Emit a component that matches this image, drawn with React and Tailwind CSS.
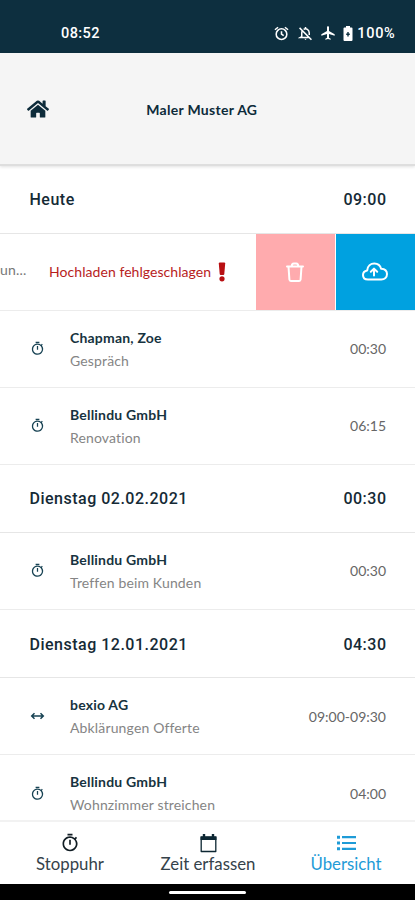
import React from 'react';
import { FaHome } from 'react-icons/fa';
import { MdAirplanemodeActive, MdOutlineTimer } from 'react-icons/md';

const days = [
    {
        title: 'Heute',
        total: '09:00',
        failed: true,
        entries: [
            { name: 'Chapman, Zoe', task: 'Gespräch', time: '00:30' },
            { name: 'Bellindu GmbH', task: 'Renovation', time: '06:15' },
        ],
    },
    {
        title: 'Dienstag 02.02.2021',
        total: '00:30',
        entries: [{ name: 'Bellindu GmbH', task: 'Treffen beim Kunden', time: '00:30' }],
    },
    {
        title: 'Dienstag 12.01.2021',
        total: '04:30',
        entries: [
            { name: 'bexio AG', task: 'Abklärungen Offerte', time: '09:00-09:30', range: true },
            { name: 'Bellindu GmbH', task: 'Wohnzimmer streichen', time: '04:00' },
        ],
    },
];

function AlarmIcon() {
    return (
        <svg width="15" height="15" viewBox="0 0 24 24" fill="none" stroke="currentColor" strokeWidth="2.5">
            <circle cx="12" cy="13" r="8.5" />
            <path d="M12 8.5V13l3.500 2.500M1.500 6l5-4M22.500 6l-5-4" />
        </svg>
    );
}

function BellOffIcon() {
    return (
        <svg width="15" height="15" viewBox="0 0 24 24" fill="none" stroke="currentColor" strokeWidth="2.400">
            <path d="M2.500 3l19 19M6.500 8.500C6 9.500 6 10.500 6 11.500V17l-2 1.200h14M9 5.500C13 3 18 6 18 11v3.500M12 1.500v3" />
            <path d="M10 20.500h4l-2 2z" fill="currentColor" stroke="none" />
        </svg>
    );
}

function BatteryIcon() {
    return (
        <svg width="10" height="15" viewBox="0 0 10 15">
            <path d="M3 0h4v1.500h1.500q1 0 1 1V14q0 1-1 1h-7q-1 0-1-1V2.500q0-1 1-1H3z" fill="currentColor" />
            <path d="M5 6v4.400M3.200 8.200h3.600" stroke="#0d2f3f" strokeWidth="1.400" />
        </svg>
    );
}

function TrashIcon() {
    return (
        <svg width="20" height="22" viewBox="0 0 20 22" fill="none" stroke="currentColor" strokeWidth="2" strokeLinejoin="round" strokeLinecap="round">
            <path d="M2 5.500h16M3.500 5.500l.9 13q.1 1.500 1.500 1.500h8.200q1.400 0 1.500-1.500l.9-13M6.800 5q0-2.600 1.900-2.600h2.600q1.900 0 1.900 2.600" />
        </svg>
    );
}

function CloudUploadIcon() {
    return (
        <svg width="26" height="19" viewBox="0 0 26 19" fill="none" stroke="currentColor" strokeWidth="2" strokeLinejoin="round" strokeLinecap="round">
            <path d="M6 17.500C2.800 17.500 1 15.500 1 13c0-2.500 1.700-4.200 4.200-4.600C5.600 4 8.800 1.500 12.300 1.500c3.400 0 6 2 6.800 5.300 3.600.2 5.900 2.300 5.900 5.300 0 3.200-2.400 5.400-5.700 5.400z" />
            <path d="M12 13.500V7M8.800 9.800L12 6.600l3.200 3.200" />
        </svg>
    );
}

function RangeIcon() {
    return (
        <svg width="15" height="10" viewBox="0 0 15 10" fill="none" stroke="currentColor" strokeWidth="1.500">
            <path d="M2 5h11M4.500 2.200L1.700 5l2.800 2.800M10.500 2.200L13.300 5l-2.800 2.800" />
        </svg>
    );
}

function CalendarIcon() {
    return (
        <svg width="17" height="19" viewBox="0 0 17 19">
            <path d="M1.200 3.500h14.600v14H1.200z" fill="none" stroke="currentColor" strokeWidth="1.300" strokeLinejoin="round" />
            <path d="M.5 2.300h16v3.700H.5zM2.800 0h2.400V4H2.800zM11.800 0h2.400V4h-2.400z" fill="currentColor" />
        </svg>
    );
}

function ListIcon() {
    return (
        <svg width="19" height="16" viewBox="0 0 19 16" fill="currentColor">
            <path d="M0 .7h3v3H0zM0 6.500h3v3H0zM0 12.300h3v3H0zM5 1.100h14v2.200H5zM5 6.900h14v2.200H5zM5 12.700h14v2.200H5z" />
        </svg>
    );
}

function StatusBar() {
    return (
        <div className="flex h-[52.500px] shrink-0 items-end justify-between bg-[#0d2f3f] pr-[19.500px] pb-[11px] pl-[61px] font-['Roboto',sans-serif] text-[14.500px] leading-[17px] font-medium text-white">
            <span className="tracking-[0.4px]">08:52</span>
            <div className="flex items-center">
                <AlarmIcon />
                <span className="ml-[9px]"><BellOffIcon /></span>
                <MdAirplanemodeActive className="ml-[7px] size-[16px]" />
                <span className="ml-[7px]"><BatteryIcon /></span>
                <span className="ml-[4px] tracking-[0.7px]">100%</span>
            </div>
        </div>
    );
}

function FailedEntry() {
    return (
        <div className="flex h-[77px] shrink-0 border-b border-[#ececec]">
            <div className="flex flex-1 items-center">
                <span className="mb-[4px] w-[49px] text-[14px] tracking-[0.2px] text-[#777]">un...</span>
                <span className="mb-px text-[14px] tracking-[0.060px] whitespace-nowrap text-[#b71c1c]">Hochladen fehlgeschlagen</span>
                <svg className="ml-[7px]" width="8" height="20" viewBox="0 0 8 20" fill="#b80f12">
                    <path d="M.8 1.500q0-1 1-1h4.400q1 0 1 1L6.300 12q-.1 1-1 1H2.700q-.9 0-1-1z" />
                    <circle cx="4" cy="16.800" r="2.600" />
                </svg>
            </div>
            <button className="flex w-[79px] items-center justify-center bg-[#ffabae] pr-px text-white"><TrashIcon /></button>
            <button className="ml-[1px] flex w-[79px] items-center justify-center bg-[#00a1e0] pr-px text-white"><CloudUploadIcon /></button>
        </div>
    );
}

function Entry({ entry }) {
    return (
        <div className="flex h-[77.200px] shrink-0 items-center border-b border-[#ececec] pr-[29px] pl-[30px]">
            <span className="flex w-[40px] items-center text-[#174253]">
                {entry.range ? <RangeIcon /> : <MdOutlineTimer className="size-[15px]" />}
            </span>
            <div className="flex-1 text-[14px] leading-[23px]">
                <div className="font-bold tracking-[0.2px] text-[#173340]">{entry.name}</div>
                <div className="tracking-[0.150px] text-[#858585]">{entry.task}</div>
            </div>
            <span className="text-[14px] text-[#666]">{entry.time}</span>
        </div>
    );
}

function Day({ day }) {
    return (
        <>
            <div className="flex h-[68px] shrink-0 items-center justify-between border-b border-[#e6e6e6] pt-[2px] pr-[28.500px] pl-[29.500px] font-['Roboto',sans-serif] text-[16px] font-medium tracking-[0.500px] text-[#152a36]">
                <span>{day.title}</span>
                <span>{day.total}</span>
            </div>
            {day.failed && <FailedEntry />}
            {day.entries.map((entry, i) => <Entry key={i} entry={entry} />)}
        </>
    );
}

function TabBar() {
    return (
        <div className="grid h-[64px] shrink-0 grid-cols-3 border-t-2 border-[#f2f2f2] bg-white pl-px text-[16.800px] leading-[20px] text-[#35424a]">
            <div className="flex flex-col items-center pt-[11px]">
                <MdOutlineTimer className="size-[20px] text-[#111d24]" />
                <span className="mt-px">Stoppuhr</span>
            </div>
            <div className="flex flex-col items-center pt-[11px]">
                <span className="flex h-[20px] items-center text-[#0d2733]"><CalendarIcon /></span>
                <span className="mt-px">Zeit erfassen</span>
            </div>
            <div className="flex flex-col items-center pt-[11px] text-[#1e9bd7]">
                <span className="flex h-[20px] items-center"><ListIcon /></span>
                <span className="mt-px">Übersicht</span>
            </div>
        </div>
    );
}

export default function App() {
    return (
        <div className="flex h-[900px] w-[415px] flex-col overflow-hidden bg-white font-['Lato',sans-serif]">
            <StatusBar />
            <div className="grid h-[113px] shrink-0 grid-cols-[1fr_auto_1fr] items-center border-b-2 border-[#dedede] bg-[#f5f5f5] pt-[2px] pr-[38px] pl-[26.500px] text-[#0d2b3a] shadow-[0_1px_3px_rgba(0,0,0,0.12)]">
                <FaHome className="size-[22px]" />
                <h1 className="text-[14px] font-bold tracking-[0.300px] whitespace-nowrap">Maler Muster AG</h1>
            </div>
            <div className="flex min-h-0 flex-1 flex-col overflow-hidden">
                {days.map((day) => <Day key={day.title} day={day} />)}
            </div>
            <TabBar />
            <div className="flex h-[16px] shrink-0 items-center justify-center bg-black">
                <div className="h-[3px] w-[77px] rounded-full bg-white" />
            </div>
        </div>
    );
}
